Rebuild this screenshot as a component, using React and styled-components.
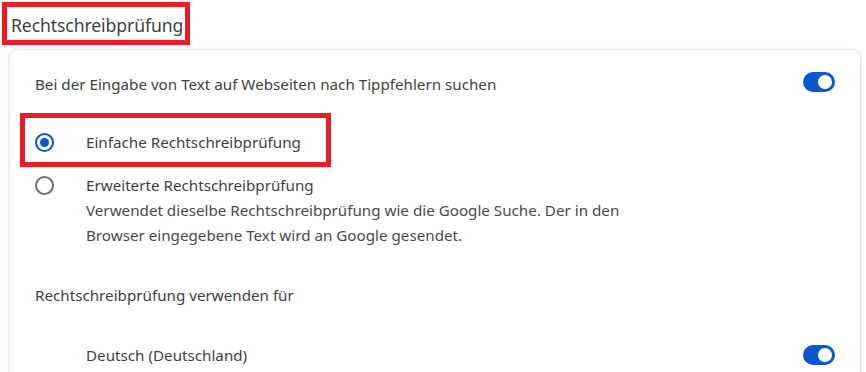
import React, { useState } from "react";
import styled, { createGlobalStyle } from "styled-components";

const GlobalStyle = createGlobalStyle`
  body {
    margin: 0;
    background: #ffffff;
    font-family: "Segoe UI", "Noto Sans", "Open Sans", sans-serif;
    color: #3c3c3c;
  }
`

const Page = styled.div`
  padding: 2px 0 0 2px;
  width: 866px;
  height: 372px;
  overflow: hidden;
  box-sizing: border-box;
`

const Mark = styled.div`
  border: 5px solid #ec1c24;
  box-sizing: border-box;
`

const TitleMark = styled(Mark)`
  width: 188px;
  height: 43px;
  padding: 6px 0 0 4px;
`

const Title = styled.h2`
  margin: 0;
  font-size: 17.6px;
  font-weight: 400;
  line-height: 24px;
  color: #3f3f3f;
  letter-spacing: -0.1px;
`

const Card = styled.section`
  margin: 5px 0 0 8px;
  width: 850px;
  height: 340px;
  background: #fff;
  border-radius: 8px;
  box-shadow: 0 0 3px rgba(0, 0, 0, 0.18), 0 1px 4px rgba(0, 0, 0, 0.08);
`

const Row = styled.div`
  display: flex;
  align-items: center;
  justify-content: space-between;
  height: ${(p) => p.h}px;
  padding: 0 25px 0 ${(p) => p.indent}px;
  font-size: 15.2px;
`

const Label = styled.span`
  color: #3f3f3f;
  padding-top: ${(p) => p.shift || 0}px;
`

const Toggle = styled.button`
  position: relative;
  width: 32px;
  height: 20px;
  padding: 0;
  border: none;
  border-radius: 10px;
  background: #0b57d0;
  cursor: pointer;

  &::after {
    content: "";
    position: absolute;
    top: 3px;
    right: 3px;
    width: 14px;
    height: 14px;
    border-radius: 50%;
    background: #fff;
  }
`

const Options = styled.div`
  display: flex;
  flex-direction: column;
`

const OptionMark = styled(Mark)`
  width: 311px;
  height: 54px;
  margin-left: 10px;
  display: flex;
  align-items: center;
`

const Option = styled.label`
  display: flex;
  align-items: flex-start;
  font-size: 15.2px;
  line-height: 25px;
  padding-left: ${(p) => p.indent}px;
  cursor: pointer;
`

const RadioDot = styled.span`
  flex: none;
  width: 19px;
  height: 19px;
  margin: ${(p) => p.top || 3}px 32px 0 0;
  box-sizing: border-box;
  border-radius: 50%;
  border: 2px solid ${(p) => (p.checked ? "#0b57d0" : "#6f6f6f")};
  display: flex;
  align-items: center;
  justify-content: center;

  &::after {
    content: "";
    width: 9px;
    height: 9px;
    border-radius: 50%;
    background: ${(p) => (p.checked ? "#0b57d0" : "transparent")};
  }
`

const OptionText = styled.div`
  color: #3f3f3f;
  padding-top: ${(p) => p.shift || 0}px;
`

const Sub = styled.div`
  color: #4a4a4a;
`

export default function App() {
  const [mode, setMode] = useState("basic");

  return (
    <Page>
      <GlobalStyle />
      <TitleMark>
        <Title>Rechtschreibprüfung</Title>
      </TitleMark>
      <Card>
        <Row h={63} indent={25}>
          <Label shift={4}>Bei der Eingabe von Text auf Webseiten nach Tippfehlern suchen</Label>
          <Toggle aria-label="Rechtschreibprüfung aktivieren" />
        </Row>
        <Options>
          <OptionMark>
            <Option indent={10} onClick={() => setMode("basic")}>
              <RadioDot top={8} checked={mode === "basic"} />
              <OptionText shift={5}>Einfache Rechtschreibprüfung</OptionText>
            </Option>
          </OptionMark>
          <Option indent={25} style={{ paddingTop: 6 }} onClick={() => setMode("enhanced")}>
            <RadioDot checked={mode === "enhanced"} />
            <div>
              <OptionText>Erweiterte Rechtschreibprüfung</OptionText>
              <Sub>
                Verwendet dieselbe Rechtschreibprüfung wie die Google Suche. Der in den
                <br />
                Browser eingegebene Text wird an Google gesendet.
              </Sub>
            </div>
          </Option>
        </Options>
        <Row h={70} indent={25} style={{ marginTop: 12 }}>
          <Label>Rechtschreibprüfung verwenden für</Label>
        </Row>
        <Row h={50} indent={76}>
          <Label>Deutsch (Deutschland)</Label>
          <Toggle aria-label="Deutsch (Deutschland)" />
        </Row>
      </Card>
    </Page>
  );
}
